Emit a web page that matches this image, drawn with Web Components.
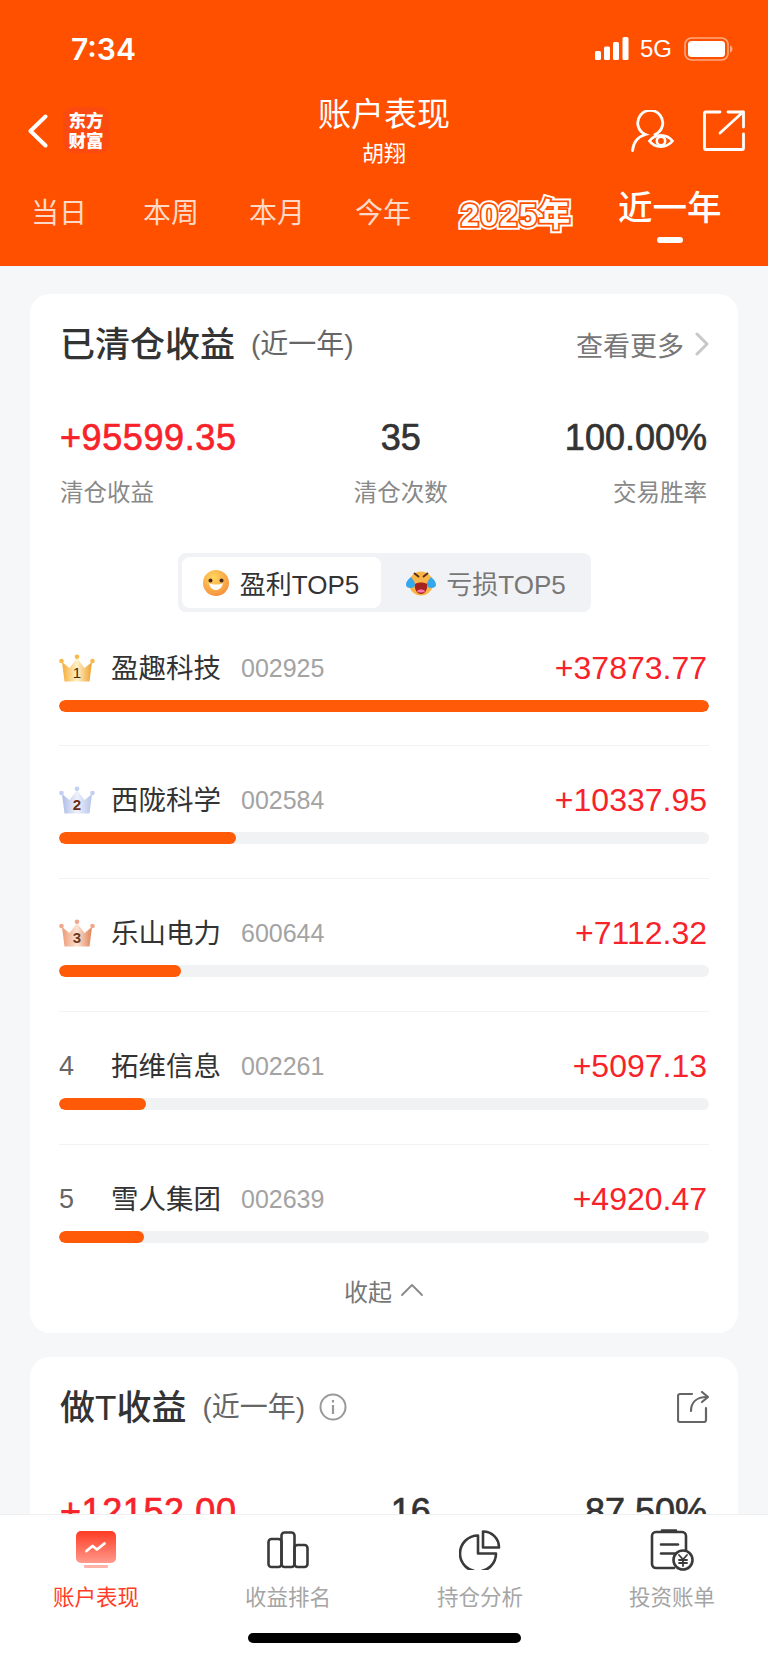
<!DOCTYPE html>
<html lang="zh"><head><meta charset="utf-8">
<style>
html,body{margin:0;padding:0}
body{width:768px;height:1663px;overflow:hidden;background:#f6f7f9;font-family:"Liberation Sans","Noto Sans CJK SC",sans-serif}
app-shell{display:flex;flex-direction:column;height:1663px}
</style></head><body>
<app-shell>
  <top-header slot="top"></top-header>
  <div slot="scroll">
  <closed-card></closed-card>
  <t-card></t-card>
  </div>
  <tab-bar slot="bottom"></tab-bar>
</app-shell>
<script>
const F='"Liberation Sans","Noto Sans CJK SC",sans-serif';
function el(name,html){customElements.define(name,class extends HTMLElement{constructor(){super();this.attachShadow({mode:'open'}).innerHTML=typeof html==='function'?html(this):html;}});}

el('app-shell',`<style>
:host{display:flex;flex-direction:column;height:1663px;overflow:hidden}
.s{flex:1;min-height:0;overflow:hidden;background:#f6f7f9}
</style><slot name="top"></slot><div class="s"><slot name="scroll"></slot></div><slot name="bottom"></slot>`);

el('top-header',`<style>
:host{display:block;height:266px;background:#ff5000;color:#fff;font-family:${F}}
.status{height:100px;display:flex;align-items:center;box-sizing:border-box;padding:0 0 0 71px}
.time{font-family:Inter,"Liberation Sans",sans-serif;font-size:30px;font-weight:600;line-height:1;margin-top:-3px}
.right{margin-left:auto;display:flex;align-items:center;padding-right:35px;margin-top:-3px}
.g{font-size:24px;margin:0 12px 0 11px;line-height:1}
.nav{height:68px;display:grid;grid-template-columns:1fr auto 1fr;align-items:start}
.l{display:flex;align-items:flex-start;padding-left:27px}
.logo{width:46px;height:46px;margin:7px 0 0 14px;border-radius:10px;background:#fa4a10;display:flex;align-items:center;justify-content:center;font-size:17.500px;font-weight:900;font-family:"Noto Sans CJK SC",serif}
.logo span{display:block;width:2em;line-height:20px;word-break:break-all;text-align:center}
.title{text-align:center;margin-top:-7px}
.title b{display:block;font-weight:400;font-size:33px;line-height:44px}
.title span{display:block;font-size:22px;line-height:28px;margin-top:3px}
.acts{justify-self:end;display:flex;gap:29px;padding-right:23px;padding-top:10px}
.tabs{display:grid;grid-template-columns:31px 55px 57px 55px 51px 55px 51px 55px 47px 122px 39px 108px;height:98px;box-sizing:border-box}
.t{font-size:28px;line-height:40px;margin-top:26px;color:#ffd9c7;white-space:nowrap}
</style>
<div class="status"><span class="time">7:34</span><div class="right">
<svg width="34" height="23" viewBox="0 0 34 23" fill="#fff"><rect x="0" y="14" width="6" height="9" rx="1.5"/><rect x="9" y="9.500" width="6" height="13.500" rx="1.5"/><rect x="18" y="5" width="6" height="18" rx="1.5"/><rect x="27.500" y="0" width="6" height="23" rx="1.5"/></svg>
<span class="g">5G</span>
<svg width="49" height="24" viewBox="0 0 49 24"><rect x="1" y="1" width="43" height="22" rx="6.500" fill="none" stroke="#fff" stroke-opacity=".5" stroke-width="1.6"/><rect x="4" y="4" width="37" height="16" rx="3.500" fill="#fff"/><path d="M46 8.500c1.800.6 2.500 2 2.500 3.500s-.7 2.900-2.500 3.500z" fill="#fff" fill-opacity=".5"/></svg>
</div></div>
<div class="nav">
<div class="l">
<svg style="margin-top:14px" width="22" height="34" viewBox="0 0 22 34" fill="none" stroke="#fff" stroke-width="4" stroke-linecap="round" stroke-linejoin="round"><path d="M18.500 2.500 3.500 17l15 14.500"/></svg>
<div class="logo"><span>东方财富</span></div>
</div>
<div class="title"><b>账户表现</b><span>胡翔</span></div>
<div class="acts">
<svg width="43" height="42" viewBox="0 0 43 42" fill="none" stroke="#fff" stroke-width="2.800" stroke-linecap="round"><path d="M24 24.500a12.500 12.500 0 1 0-9.500 0C7.500 26.500 2.500 32 1.500 40.500"/><path d="M18.500 31c5.500-7.500 17-7.500 23 0-6 7.500-17.500 7.500-23 0z" fill="#ff5000"/><circle cx="30" cy="31" r="4.200" stroke-width="2.600"/></svg>
<svg width="42" height="41" viewBox="0 0 42 41" fill="none" stroke="#fff" stroke-width="2.800" stroke-linecap="round" stroke-linejoin="round"><path d="M17 2H2.500a1 1 0 0 0-1 1v35.500a1 1 0 0 0 1 1h37a1 1 0 0 0 1-1V24"/><path d="M17 23 40 2"/><path d="M25 2h15.500v15"/></svg>
</div></div>
<div class="tabs">
<span></span><span class="t">当日</span><span></span><span class="t">本周</span><span></span><span class="t">本月</span><span></span><span class="t">今年</span><span></span>
<year-sticker></year-sticker><span></span>
<active-tab></active-tab>
</div>`);

el('year-sticker',`<style>
:host{display:block;font-family:${F};margin-top:27px}
.y{position:relative;isolation:isolate;font-size:32px;font-weight:700;line-height:40px;letter-spacing:1.500px;color:#fff;-webkit-text-stroke:3.600px #ff5000;paint-order:stroke fill;white-space:nowrap;display:block;margin-left:4px}
.y::before{content:"2025年";position:absolute;left:0;top:0;z-index:-1;-webkit-text-stroke:7.500px #fff;stroke-linejoin:round}
</style><span class="y">2025年</span>`);

el('active-tab',`<style>
:host{display:block;font-family:${F};color:#fff;margin-top:18px}
.a{font-size:34.500px;font-weight:500;line-height:44px;white-space:nowrap;display:block}
.b{width:26px;height:6px;background:#fff;border-radius:3px;margin:7px 0 0 39px}
</style><span class="a">近一年</span><div class="b"></div>`);

el('card-box',`<style>
:host{display:block;margin:0 30px;background:#fff;border-radius:20px;box-sizing:border-box;padding:0 29px}
</style><slot></slot>`);

el('card-head',h=>`<style>
:host{display:flex;align-items:center;font-family:${F};height:100px;padding-left:1px}
h2{margin:0;font-size:35px;line-height:40px;font-weight:500;color:#333;padding-top:1px}
.sub{font-size:28px;color:#666;margin-left:16px;line-height:40px;padding-top:2px}
</style><h2>${h.getAttribute('t')}</h2><span class="sub">(近一年)</span><slot></slot>`);

el('stat-row',h=>{const v=JSON.parse(h.getAttribute('d'));return `<style>
:host{display:flex;justify-content:space-between;font-family:${F};margin-top:22px}
.c0{padding-left:1px}
.c1{text-align:center}.c2{text-align:right;padding-right:2px}
b{display:block;font-size:36px;line-height:44px;font-weight:400;color:#333;-webkit-text-stroke:.7px currentColor;white-space:nowrap}
.r{color:#f8232a;letter-spacing:.6px}
span{display:block;font-size:23.500px;line-height:34px;color:#888;margin-top:16px}
</style>${v.map((x,i)=>`<div class="c${i}"><b class="${i==0?'r':''}">${x[0]}</b><span>${x[1]}</span></div>`).join('')}`});

el('crown-badge',h=>{const n=h.getAttribute('n');const c={1:['#f6ab35','#fff1c8','#efa02c','#4a2a08','#f8b94a'],2:['#aebce6','#eef1fb','#b6c3e8','#6d2a17','#c3cff0'],3:['#ec9a74','#fde3d3','#e08257','#6d3a20','#f0a88a']}[n];
return `<style>:host{display:block;width:36px;height:28px}</style>
<svg width="36" height="28" viewBox="0 0 36 28"><defs><linearGradient id="g" x1="0" y1="0" x2="1" y2="0"><stop offset="0" stop-color="${c[0]}"/><stop offset=".5" stop-color="${c[1]}"/><stop offset="1" stop-color="${c[2]}"/></linearGradient></defs>
<path d="M3 8l7.500 6L18 4l7.500 10L33 8l-2.500 19.500h-25z" fill="url(#g)"/><circle cx="2.500" cy="7" r="2.300" fill="${c[4]}"/><circle cx="18" cy="2.800" r="2.300" fill="${c[4]}"/><circle cx="33.500" cy="7" r="2.300" fill="${c[4]}"/>
<text x="18" y="24" text-anchor="middle" font-size="15" font-weight="${n==1?400:700}" fill="${c[3]}" font-family="Liberation Sans">${n}</text></svg>`});

el('rank-row',h=>{const a=k=>h.getAttribute(k),n=+a('n');return `<style>
:host{display:block;font-family:${F};height:133px;box-sizing:border-box;border-top:1.500px solid #f1f2f4}
:host([first]){border-top:0;height:99px}
:host([last]){height:118px}
.top{display:flex;align-items:center;height:44px;margin-top:32px}
:host([first]) .top{margin-top:0}
.rk{width:52px;flex:none;font-size:27px;color:#666;line-height:1}
.nm{font-size:27.500px;color:#333;width:130px;line-height:40px;white-space:nowrap;padding-top:2px}
.cd{font-size:25px;color:#a3a3a3}
.v{margin-left:auto;font-size:32px;color:#f8232a;margin-right:2px}
.tr{height:12px;border-radius:6px;background:#f1f2f4;margin-top:10px;overflow:hidden}
.f{height:12px;border-radius:6px;background:#ff5a08;width:${a('w')}px}
</style><div class="top"><div class="rk">${n<4?`<crown-badge n="${n}"></crown-badge>`:n}</div><span class="nm">${a('name')}</span><span class="cd">${a('code')}</span><span class="v">${a('v')}</span></div><div class="tr"><div class="f"></div></div>`});

el('top-toggle',`<style>
:host{display:flex;width:413px;height:59px;margin:43px auto 34px;background:#f1f2f5;border-radius:8px;box-sizing:border-box;padding:4px;font-family:${F};font-size:26px}
.a,.b{display:flex;align-items:center;justify-content:center;white-space:nowrap}
.a{width:199px;background:#fff;border-radius:8px;color:#333;gap:11px}
.b{flex:1;color:#777;gap:10px;padding-left:5px}
</style><div class="a">
<svg width="26" height="26" viewBox="0 0 26 26"><defs><radialGradient id="f" cx=".4" cy=".3" r=".8"><stop offset="0" stop-color="#ffd75e"/><stop offset="1" stop-color="#f58a3a"/></radialGradient></defs><circle cx="13" cy="13" r="13" fill="url(#f)"/><circle cx="7.500" cy="10.500" r="2" fill="#4a2a1a"/><circle cx="18.500" cy="10.500" r="2" fill="#4a2a1a"/><path d="M6 13c4 2 10 2 14 0-1 5-4 7-7 7s-6-2-7-7z" fill="#fff"/></svg>
盈利TOP5</div><div class="b">
<svg width="30" height="26" viewBox="0 0 30 26"><circle cx="15" cy="13.500" r="12" fill="#f9b44a"/><path d="M8 3l5 4M22 3l-5 4" stroke="#5a3015" stroke-width="2"/><path d="M9 14c3-2 9-2 12 0 1 5-2 10-6 10s-7-5-6-10z" fill="#a5241f"/><path d="M11 21c2-2 6-2 8 0-1 2-7 2-8 0z" fill="#f7a"/><path d="M0 15c0-4 3-6 5-8 1 2 4 4 4 8s-9 4-9 0zM30 15c0-4-3-6-5-8-1 2-4 4-4 8s9 4 9 0z" fill="#35a7ec"/></svg>
亏损TOP5</div>`);

el('more-link',`<style>:host{margin-left:auto;display:flex;align-items:center;font-family:${F};font-size:27px;color:#777;gap:11px}</style>查看更多<svg width="14" height="24" viewBox="0 0 14 24" fill="none" stroke="#c8c8c8" stroke-width="3" stroke-linecap="round" stroke-linejoin="round"><path d="M2 2l10 10L2 22"/></svg>`);

el('closed-card',`<style>:host{display:block;padding-top:28px}
.col{display:flex;align-items:center;justify-content:center;gap:8px;font-family:${F};font-size:24px;color:#777;height:56px}
.end{height:15px}
</style><card-box>
<card-head t="已清仓收益"><more-link></more-link></card-head>
<stat-row d='[["+95599.35","清仓收益"],["35","清仓次数"],["100.00%","交易胜率"]]'></stat-row>
<top-toggle></top-toggle>
<rank-row first n="1" name="盈趣科技" code="002925" v="+37873.77" w="650"></rank-row>
<rank-row n="2" name="西陇科学" code="002584" v="+10337.95" w="177"></rank-row>
<rank-row n="3" name="乐山电力" code="600644" v="+7112.32" w="122"></rank-row>
<rank-row n="4" name="拓维信息" code="002261" v="+5097.13" w="87"></rank-row>
<rank-row last n="5" name="雪人集团" code="002639" v="+4920.47" w="85"></rank-row>
<div class="col">收起<svg width="24" height="14" viewBox="0 0 24 14" fill="none" stroke="#888" stroke-width="1.800" stroke-linecap="round" stroke-linejoin="round"><path d="M2 12 12 2l10 10"/></svg></div>
<div class="end"></div>
</card-box>`);

el('t-card',`<style>:host{display:block;padding-top:24px}
.i{margin-left:14px}.sh{margin-left:auto}
.stats{margin-top:33px}
.end{height:40px}
</style><card-box>
<card-head t="做T收益"><svg class="i" width="28" height="28" viewBox="0 0 28 28" fill="none" stroke="#999" stroke-width="2"><circle cx="14" cy="14" r="12.500"/><path d="M14 12v9M14 7v2.500" stroke-width="2.200"/></svg>
<svg class="sh" width="32" height="32" viewBox="0 0 32 32" fill="none" stroke="#666" stroke-width="2.200" stroke-linecap="round" stroke-linejoin="round"><path d="M15 3H3a2 2 0 0 0-2 2v24a2 2 0 0 0 2 2h24a2 2 0 0 0 2-2V17"/><path d="M14 20c0-8 5-14 16-14"/><path d="M25 1l6 5-6 5"/></svg></card-head>
<stat-row class="stats" d='[["+12152.00","做T收益"],["16","做T次数"],["87.50%","交易胜率"]]'></stat-row>
<div class="end"></div>
</card-box>`);

el('tab-bar',`<style>
:host{display:block;height:149px;background:#fff;border-top:1.500px solid #eeeff1;box-sizing:border-box;font-family:${F}}
.row{display:grid;grid-template-columns:repeat(4,192px)}
.it{display:flex;flex-direction:column;align-items:center;font-size:21.500px;color:#a5a5a5;padding-top:14px}
.ic{height:42px;display:flex;align-items:center;justify-content:center}
.it span{line-height:30px;margin-top:12px}
.on{color:#ff3d26}
.hm{width:273px;height:10px;border-radius:5px;background:#000;margin:20px auto 0}
</style><div class="row">
<div class="it on"><div class="ic"><svg width="42" height="38" viewBox="0 0 42 38"><defs><linearGradient id="r" x1="0" y1="0" x2="0" y2="1"><stop offset="0" stop-color="#ff3b24"/><stop offset="1" stop-color="#ff9a8c"/></linearGradient></defs><rect x="1" y="0" width="40" height="32" rx="5" fill="url(#r)"/><rect x="9" y="34" width="24" height="3" rx="1" fill="#ffb3a8"/><path d="M11.500 20l6-5 4.500 3.500 7.500-6" fill="none" stroke="#fff" stroke-width="2.800" stroke-linecap="round" stroke-linejoin="round"/></svg></div><span>账户表现</span></div>
<div class="it"><div class="ic"><svg width="42" height="38" viewBox="0 0 42 38" fill="none" stroke="#3a3a3a" stroke-width="2.600" stroke-linejoin="round"><rect x="1.500" y="8" width="13" height="28" rx="3"/><rect x="14.500" y="1.500" width="13" height="34.500" rx="3"/><rect x="27.500" y="14" width="13" height="22" rx="3"/></svg></div><span>收益排名</span></div>
<div class="it"><div class="ic"><svg width="42" height="40" viewBox="0 0 42 40" fill="none" stroke="#3a3a3a" stroke-width="2.600" stroke-linejoin="round"><path d="M19 5.500A18 18 0 1 0 37 23.500H19z"/><path d="M24 1.500c9 0 16 7 16 16H24z"/></svg></div><span>持仓分析</span></div>
<div class="it"><div class="ic"><svg width="44" height="42" viewBox="0 0 44 42" fill="none" stroke="#3a3a3a" stroke-width="2.600" stroke-linecap="round"><path d="M24 39H6a4 4 0 0 1-4-4V7a4 4 0 0 1 4-4h26a4 4 0 0 1 4 4v14"/><path d="M12 1.500h14M11 15.500h17M11 24.500h14"/><circle cx="33" cy="31" r="9.500" fill="#fff"/><path d="M29 26l4 4.500 4-4.500M33 30.500V37M29 31h8M29 34h8" stroke-width="1.800"/></svg></div><span>投资账单</span></div>
</div><div class="hm"></div>`);
</script>
</body></html>
